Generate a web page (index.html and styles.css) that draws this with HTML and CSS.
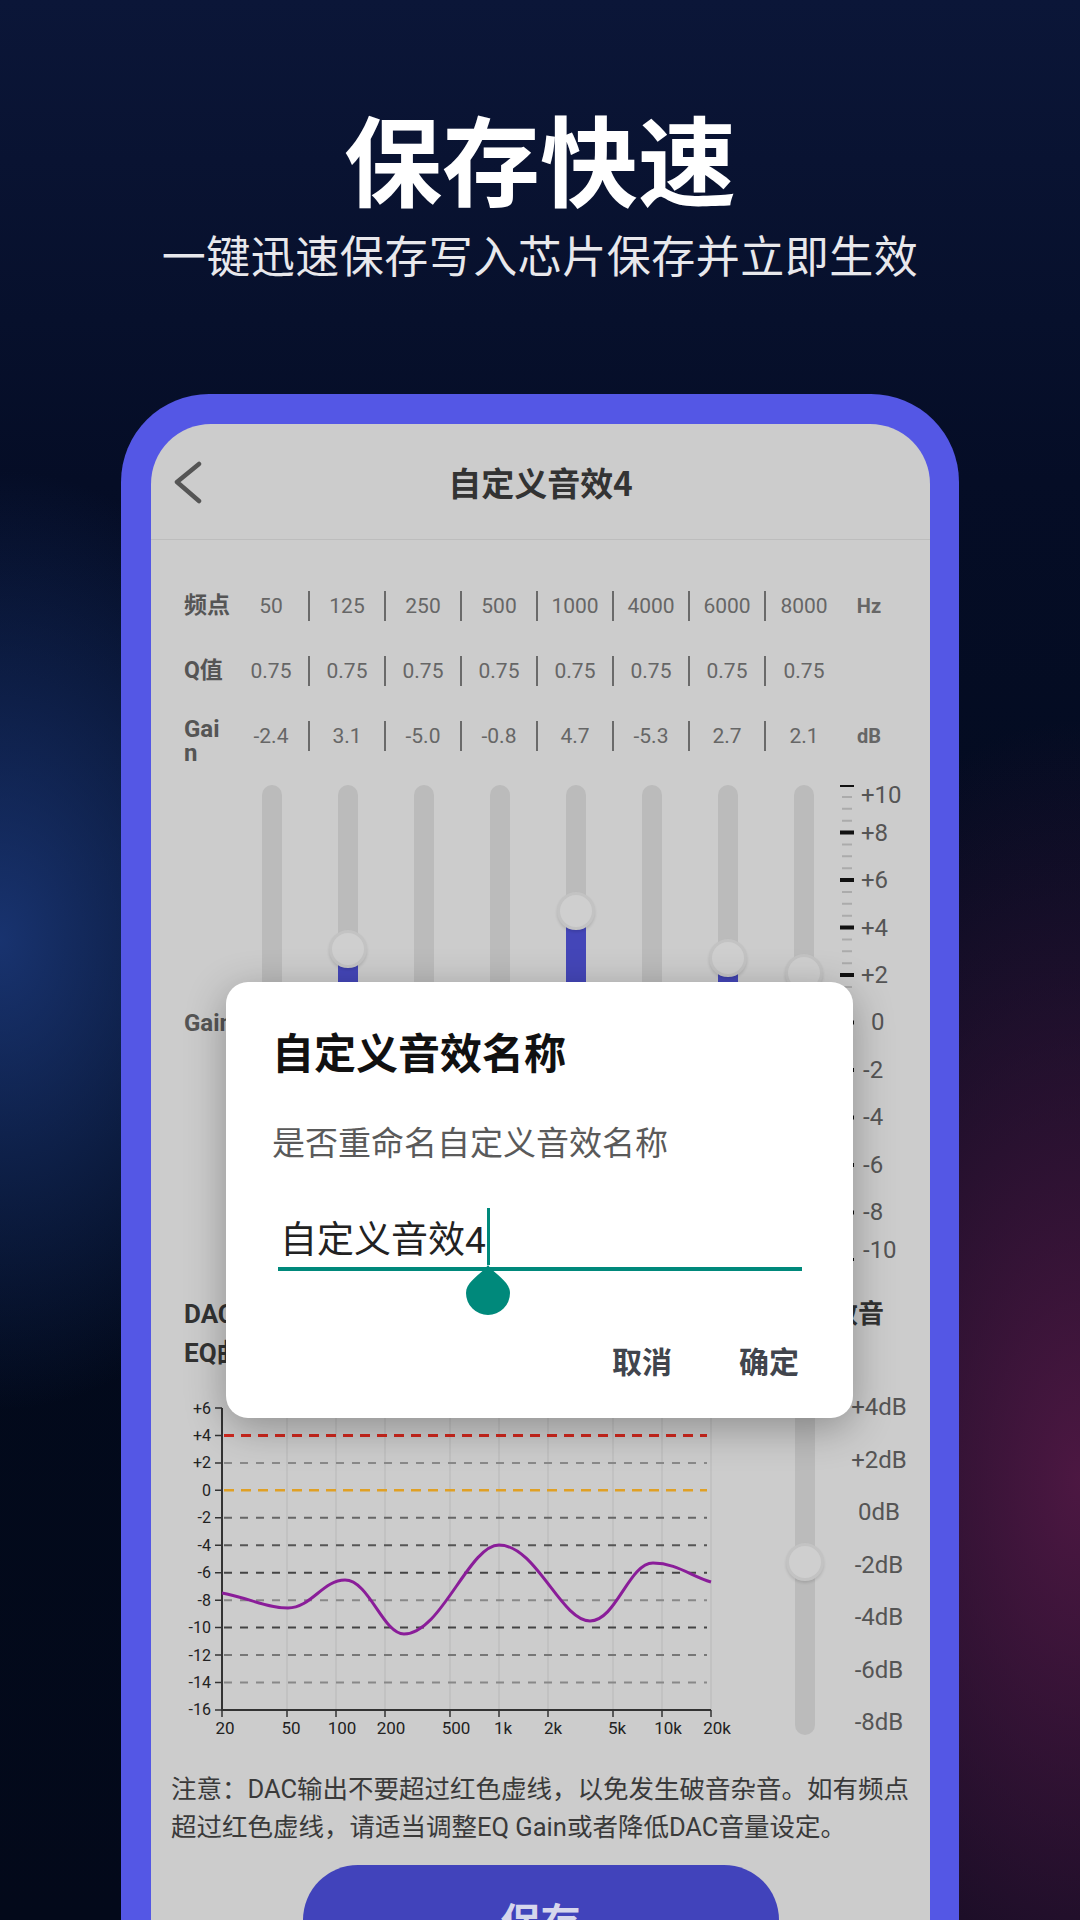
FILE: index.html
```html
<!DOCTYPE html>
<html lang="zh">
<head>
<meta charset="utf-8">
<title>保存快速</title>
<link rel="stylesheet" href="styles.css">
</head>
<body>
<header class="hero">
  <h1 class="hero-title">保存快速</h1>
  <p class="hero-sub">一键迅速保存写入芯片保存并立即生效</p>
</header>

<div class="phone">
  <div class="screen">
    <div class="appbar">
      <span class="back">
        <svg width="30" height="46" viewBox="0 0 30 46"><polyline points="25,5 3,23 25,42" fill="none" stroke="#555" stroke-width="4.5" stroke-linecap="round" stroke-linejoin="round"/></svg>
      </span>
      <span class="appbar-title">自定义音效4</span>
      <span></span>
    </div>

    <div class="params">
      <div class="prow">
        <span class="plabel">频点</span>
        <span class="pval">50</span><span class="pval">125</span><span class="pval">250</span><span class="pval">500</span><span class="pval">1000</span><span class="pval">4000</span><span class="pval">6000</span><span class="pval last">8000</span>
        <span class="punit">Hz</span>
      </div>
      <div class="prow">
        <span class="plabel">Q值</span>
        <span class="pval">0.75</span><span class="pval">0.75</span><span class="pval">0.75</span><span class="pval">0.75</span><span class="pval">0.75</span><span class="pval">0.75</span><span class="pval">0.75</span><span class="pval last">0.75</span>
        <span class="punit"></span>
      </div>
      <div class="prow">
        <span class="plabel wrap">Gain</span>
        <span class="pval">-2.4</span><span class="pval">3.1</span><span class="pval">-5.0</span><span class="pval">-0.8</span><span class="pval">4.7</span><span class="pval">-5.3</span><span class="pval">2.7</span><span class="pval last">2.1</span>
        <span class="punit">dB</span>
      </div>
    </div>

    <div class="sliders">
      <span class="slabel">Gain</span>
      <div class="band" style="--v:-2.4"><div class="track"><div class="fill"></div><div class="knob"></div></div></div>
      <div class="band" style="--v:3.1"><div class="track"><div class="fill"></div><div class="knob"></div></div></div>
      <div class="band" style="--v:-5.0"><div class="track"><div class="fill"></div><div class="knob"></div></div></div>
      <div class="band" style="--v:-0.8"><div class="track"><div class="fill"></div><div class="knob"></div></div></div>
      <div class="band" style="--v:4.7"><div class="track"><div class="fill"></div><div class="knob"></div></div></div>
      <div class="band" style="--v:-5.3"><div class="track"><div class="fill"></div><div class="knob"></div></div></div>
      <div class="band" style="--v:2.7"><div class="track"><div class="fill"></div><div class="knob"></div></div></div>
      <div class="band" style="--v:2.1"><div class="track"><div class="fill"></div><div class="knob"></div></div></div>
      <svg class="scale" width="90" height="480" viewBox="0 0 90 480">
        <line x1="9" y1="0" x2="9" y2="476" stroke="#ababab" stroke-width="10" stroke-dasharray="2 9.875" stroke-dashoffset="1"/>
        <line x1="9" y1="0" x2="9" y2="476" stroke="#111" stroke-width="14" stroke-dasharray="4 43.5" stroke-dashoffset="2"/>
        <text x="23" y="10">+10</text>
        <text x="23" y="48">+8</text>
        <text x="23" y="95">+6</text>
        <text x="23" y="142.5">+4</text>
        <text x="23" y="190">+2</text>
        <text x="33" y="237">0</text>
        <text x="25" y="285">-2</text>
        <text x="25" y="332">-4</text>
        <text x="25" y="380">-6</text>
        <text x="25" y="427">-8</text>
        <text x="25" y="465">-10</text>
      </svg>
    </div>

    <div class="dac-head">
      <div class="dac-left">DAC音量调节<br>EQ曲线图</div>
      <div class="dac-right">效音</div>
    </div>

    <div class="chart-row">
      <svg class="chart" width="600" height="360" viewBox="0 0 600 360">
        <g stroke="#bfbfbf" stroke-width="1.5">
          <line x1="136" y1="18" x2="136" y2="320"/>
          <line x1="185" y1="18" x2="185" y2="320"/>
          <line x1="234" y1="18" x2="234" y2="320"/>
          <line x1="299" y1="18" x2="299" y2="320"/>
          <line x1="348" y1="18" x2="348" y2="320"/>
          <line x1="397" y1="18" x2="397" y2="320"/>
          <line x1="462" y1="18" x2="462" y2="320"/>
          <line x1="511" y1="18" x2="511" y2="320"/>
          <line x1="560" y1="18" x2="560" y2="320"/>
        </g>
        <g fill="none" stroke-width="2" stroke-dasharray="8 8">
          <line x1="73" y1="72.9" x2="556" y2="72.9" stroke="#8a8a8a"/>
          <line x1="73" y1="127.8" x2="556" y2="127.8" stroke="#666"/>
          <line x1="73" y1="155.25" x2="556" y2="155.25" stroke="#555"/>
          <line x1="73" y1="182.7" x2="556" y2="182.7" stroke="#444"/>
          <line x1="73" y1="210.15" x2="556" y2="210.15" stroke="#888"/>
          <line x1="73" y1="237.6" x2="556" y2="237.6" stroke="#444"/>
          <line x1="73" y1="265.05" x2="556" y2="265.05" stroke="#777"/>
          <line x1="73" y1="292.5" x2="556" y2="292.5" stroke="#888"/>
        </g>
        <line x1="73" y1="45.45" x2="556" y2="45.45" stroke="#d2281e" stroke-width="3" stroke-dasharray="10 7"/>
        <line x1="73" y1="100.35" x2="556" y2="100.35" stroke="#e0a024" stroke-width="2.5" stroke-dasharray="10 7"/>
        <path d="M71 18V320H560" fill="none" stroke="#333" stroke-width="2"/>
        <path d="M64 18H71M64 45.45H71M64 72.9H71M64 100.35H71M64 127.8H71M64 155.25H71M64 182.7H71M64 210.15H71M64 237.6H71M64 265.05H71M64 292.5H71M64 319.95H71" stroke="#333" stroke-width="1.5"/>
        <path d="M71 320V327M136 320V327M185 320V327M234 320V327M299 320V327M348 320V327M397 320V327M462 320V327M511 320V327M560 320V327" stroke="#333" stroke-width="1.5"/>
        <path d="M71,203 C98,208 115,218 137,218 C160,218 172,190 194,190 C218,190 232,244 253,244 C290,244 318,155 348,155 C385,155 410,231 439,231 C465,231 478,173 502,173 C525,173 540,186 560,192" fill="none" stroke="#8a1d99" stroke-width="3"/>
        <g class="ylab">
          <text x="60" y="18">+6</text>
          <text x="60" y="45.45">+4</text>
          <text x="60" y="72.9">+2</text>
          <text x="60" y="100.35">0</text>
          <text x="60" y="127.8">-2</text>
          <text x="60" y="155.25">-4</text>
          <text x="60" y="182.7">-6</text>
          <text x="60" y="210.15">-8</text>
          <text x="60" y="237.6">-10</text>
          <text x="60" y="265.05">-12</text>
          <text x="60" y="292.5">-14</text>
          <text x="60" y="319.95">-16</text>
        </g>
        <g class="xlab">
          <text x="74" y="338">20</text>
          <text x="140" y="338">50</text>
          <text x="191" y="338">100</text>
          <text x="240" y="338">200</text>
          <text x="305" y="338">500</text>
          <text x="352" y="338">1k</text>
          <text x="402" y="338">2k</text>
          <text x="466" y="338">5k</text>
          <text x="517" y="338">10k</text>
          <text x="566" y="338">20k</text>
        </g>
      </svg>
      <div class="vol">
        <div class="vol-track"><div class="vol-knob"></div></div>
        <div class="vol-labels">
          <span>+4dB</span><span>+2dB</span><span>0dB</span><span>-2dB</span><span>-4dB</span><span>-6dB</span><span>-8dB</span>
        </div>
      </div>
    </div>

    <p class="note">注意：DAC输出不要超过红色虚线，以免发生破音杂音。如有频点<br>超过红色虚线，请适当调整EQ Gain或者降低DAC音量设定。</p>

    <div class="save">保存</div>

    <div class="dialog">
      <h2 class="dlg-title">自定义音效名称</h2>
      <p class="dlg-msg">是否重命名自定义音效名称</p>
      <div class="dlg-input">
        <span>自定义音效4</span>
        <span class="caret">
          <svg class="handle" width="44" height="50" viewBox="0 0 44 50"><path d="M22 0C28 9 44 16 44 28A22 22 0 0 1 0 28C0 16 16 9 22 0Z" fill="#00897b"/></svg>
        </span>
      </div>
      <div class="dlg-actions">
        <span>取消</span>
        <span>确定</span>
      </div>
    </div>
  </div>
</div>
</body>
</html>
```

FILE: styles.css
```css
html, body {
  margin: 0;
  padding: 0;
}

body {
  width: 1080px;
  height: 1920px;
  overflow: hidden;
  font-family: Roboto, "Noto Sans CJK SC", sans-serif;
  background:
    radial-gradient(ellipse 330px 470px at 0 940px, rgba(28, 58, 125, 0.85), rgba(28, 58, 125, 0) 100%),
    radial-gradient(ellipse 400px 760px at 1080px 1480px, rgba(80, 24, 68, 0.95), rgba(80, 24, 68, 0) 100%),
    linear-gradient(180deg, #0b1638 0%, #050d26 25%, #020a1c 60%, #03091a 100%);
}

/* hero */
.hero {
  padding-top: 97px;
  text-align: center;
}

.hero-title {
  margin: 0;
  font-family: "Noto Sans CJK SC", sans-serif;
  font-weight: 700;
  font-size: 98px;
  line-height: 118px;
  color: #ffffff;
}

.hero-sub {
  margin: 11px 0 0;
  font-family: "Noto Sans CJK SC", sans-serif;
  font-weight: 400;
  font-size: 44px;
  line-height: 56px;
  letter-spacing: 0.5px;
  color: #e8e8ec;
}

/* phone */
.phone {
  margin: 112px 0 0 121px;
  width: 838px;
  height: 1600px;
  box-sizing: border-box;
  padding: 30px 29px 0 30px;
  background: #5457e5;
  border-radius: 88px 88px 0 0;
}

.screen {
  position: relative;
  height: 100%;
  background: #cccccc;
  border-radius: 60px 60px 0 0;
  overflow: hidden;
}

.appbar {
  display: grid;
  grid-template-columns: 1fr auto 1fr;
  align-items: center;
  height: 115px;
  border-bottom: 1px solid #bdbdbd;
}

.back {
  display: flex;
  padding-left: 23px;
}

.appbar-title {
  font-family: "Noto Sans CJK SC", sans-serif;
  font-weight: 700;
  font-size: 33px;
  line-height: 40px;
  color: #333333;
}

/* parameter table */
.params {
  padding: 51px 0 0 33px;
  display: flex;
  flex-direction: column;
  gap: 35px;
}

.prow {
  display: grid;
  grid-template-columns: 50px repeat(8, 76px) 54px;
  grid-template-rows: 30px;
  height: 30px;
  align-items: center;
}

.plabel {
  font-weight: 700;
  font-size: 23px;
  line-height: 30px;
  color: #555555;
}

.plabel.wrap {
  width: 40px;
  word-break: break-all;
  line-height: 24px;
  font-size: 24px;
  align-self: start;
  margin-top: -4px;
}

.pval {
  box-sizing: border-box;
  height: 30px;
  line-height: 30px;
  text-align: center;
  font-size: 21px;
  color: #666666;
  border-right: 2px solid #6a6a6a;
}

.pval.last {
  border-right: none;
}

.punit {
  text-align: center;
  font-weight: 700;
  font-size: 20px;
  line-height: 30px;
  color: #666666;
}

/* sliders */
.sliders {
  margin-top: 34px;
  padding-left: 33px;
  display: grid;
  grid-template-columns: 50px repeat(8, 76px) 90px;
  grid-template-rows: 480px;
}

.slabel {
  align-self: start;
  margin-top: 223px;
  font-weight: 700;
  font-size: 24px;
  line-height: 30px;
  color: #555555;
}

.band {
  position: relative;
}

.track {
  position: relative;
  width: 20px;
  height: 475px;
  margin: 0 auto;
  background: #bbbbbb;
  border-radius: 10px;
}

.fill {
  position: absolute;
  left: 0;
  right: 0;
  bottom: 0;
  top: calc(237.5px - var(--v) * 23.75px);
  background: #4446b8;
  border-radius: 0 0 10px 10px;
}

.knob,
.vol-knob {
  position: absolute;
  left: 50%;
  width: 38px;
  height: 38px;
  margin-left: -19px;
  box-sizing: border-box;
  border-radius: 50%;
  background: #cfcfcf;
  border: 3px solid #c3c3c3;
  box-shadow: 0 2px 3px rgba(0, 0, 0, 0.12);
}

.knob {
  top: calc(237.5px - var(--v) * 23.75px - 19px);
}

.vol-knob {
  top: 151px;
}

.scale {
  margin-left: -4px;
  overflow: visible;
}

.scale text {
  font-family: Roboto, sans-serif;
  font-size: 24px;
  fill: #555555;
  dominant-baseline: central;
}

/* DAC header */
.dac-head {
  margin-top: 30px;
  padding: 0 46px 0 33px;
  display: flex;
  justify-content: space-between;
  align-items: flex-start;
  font-weight: 700;
  font-size: 26px;
  line-height: 39px;
  color: #333333;
}

/* chart */
.chart-row {
  margin-top: 17px;
  display: flex;
  height: 360px;
}

.chart {
  flex: none;
}

.chart text {
  font-family: Roboto, sans-serif;
  fill: #222222;
  dominant-baseline: central;
}

.ylab text {
  font-size: 16px;
  text-anchor: end;
}

.xlab text {
  font-size: 17px;
  text-anchor: middle;
}

.vol {
  display: flex;
  padding-top: 2px;
}

.vol-track {
  position: relative;
  margin-left: 44px;
  width: 20px;
  height: 343px;
  background: #bbbbbb;
  border-radius: 10px;
}

.vol-labels {
  margin-left: 18px;
  width: 92px;
  height: 345px;
  display: flex;
  flex-direction: column;
  justify-content: space-between;
  text-align: center;
  font-size: 24px;
  line-height: 30px;
  color: #555555;
}

/* note and save */
.note {
  margin: 20px 0 0;
  padding-left: 20px;
  font-size: 25.5px;
  line-height: 38px;
  color: #3a3a3a;
}

.save {
  margin: 19px auto 0;
  width: 476px;
  height: 110px;
  border-radius: 55px;
  background: #4143bb;
  color: #d6d6ec;
  font-family: "Noto Sans CJK SC", sans-serif;
  font-weight: 700;
  font-size: 40px;
  line-height: 110px;
  text-align: center;
}

/* dialog */
.dialog {
  position: absolute;
  left: 75px;
  top: 558px;
  width: 627px;
  height: 436px;
  box-sizing: border-box;
  padding: 44px 54px 0 46px;
  background: #ffffff;
  border-radius: 22px;
  box-shadow: 0 10px 40px rgba(0, 0, 0, 0.3);
  font-family: "Noto Sans CJK SC", sans-serif;
}

.dlg-title {
  margin: 0;
  font-weight: 700;
  font-size: 42px;
  line-height: 50px;
  color: #111111;
}

.dlg-msg {
  margin: 43px 0 0;
  font-weight: 400;
  font-size: 33px;
  line-height: 44px;
  color: #5a5a5a;
}

.dlg-input {
  position: relative;
  box-sizing: border-box;
  margin: 51px 0 0 6px;
  width: 524px;
  height: 57px;
  padding-left: 2px;
  border-bottom: 4px solid #00897b;
  display: flex;
  align-items: center;
  font-family: Roboto, "Noto Sans CJK SC", sans-serif;
  font-size: 37px;
  line-height: 50px;
  color: #222222;
}

.caret {
  position: relative;
  align-self: flex-end;
  width: 3px;
  height: 57px;
  margin: 0 0 2px 1px;
  background: #00897b;
}

.handle {
  position: absolute;
  top: 100%;
  left: 50%;
  margin-left: -22px;
}

.dlg-actions {
  margin-top: 69px;
  display: flex;
  justify-content: flex-end;
  gap: 67px;
  font-weight: 700;
  font-size: 30px;
  line-height: 40px;
  color: #41454d;
}
```
